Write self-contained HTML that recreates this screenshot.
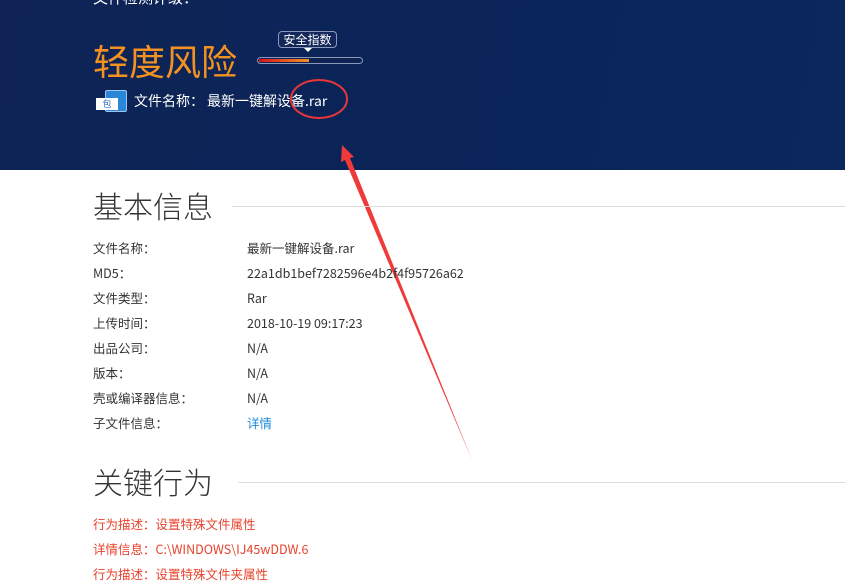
<!DOCTYPE html>
<html><head><meta charset="utf-8"><style>
*{margin:0;padding:0;box-sizing:border-box}
body{width:845px;height:583px;overflow:hidden;background:#fff;font-family:"Noto Sans CJK SC",sans-serif;position:relative}
.hdr{position:absolute;left:0;top:0;width:845px;height:170px;background:linear-gradient(100deg,#0f2455 0%,#0a2458 50%,#0b275d 100%)}
.a{position:absolute;white-space:nowrap;line-height:1.3}
.lbl{left:93px;font-size:12.5px;color:#333}
.val{left:247px;font-size:12.5px;color:#333}
.red{left:93px;font-size:12.5px;color:#e8412b}
.h2{left:93px;font-size:30px;color:#333;font-weight:300}
.line{position:absolute;height:1px;background:#ddd;right:0}
</style></head><body>
<div class="hdr"></div>
<div class="a" style="left:93px;top:-12px;font-size:15px;color:#fff">文件检测评级：</div>
<div class="a" style="left:93px;top:37px;font-size:36px;color:#f39121">轻度风险</div>
<div class="a" style="left:278px;top:31px;width:59px;height:17px;border:1px solid #8a99b8;border-radius:4px;background:#13275a;color:#fff;font-size:12px;line-height:15px;text-align:center">安全指数</div>
<div class="a" style="left:304px;top:48px;width:0;height:0;border-left:4px solid transparent;border-right:4px solid transparent;border-top:4px solid #fff"></div>
<div class="a" style="left:257px;top:57px;width:106px;height:7px;border:1px solid #8a99b8;border-radius:4px;background:#0d2252"></div>
<div class="a" style="left:259px;top:59px;width:50px;height:3px;background:linear-gradient(90deg,#d8141c,#f59220)"></div>
<div class="a" style="left:105px;top:90px;width:22px;height:22px;background:#2a86d8;border:1px solid #9cc6f0;border-radius:2px"></div>
<div class="a" style="left:96px;top:98px;width:22px;height:12px;background:#fff;color:#2a6fc0;font-size:9px;line-height:12px;text-align:center">包</div>
<div class="a" style="left:134px;top:92px;font-size:14px;color:#fff">文件名称：</div>
<div class="a" style="left:207px;top:92px;font-size:14px;color:#fff">最新一键解设备.rar</div>
<svg class="a" style="left:0;top:0" width="845" height="583">
<ellipse cx="319" cy="99" rx="28" ry="19" fill="none" stroke="#e8363a" stroke-width="2"/>
<polygon points="342,145 354,157 350,158 472,460 345,160 341,162" fill="#f03a3a"/>
</svg>
<div class="a h2" style="top:186px">基本信息</div>
<div class="line" style="left:232px;top:206px"></div>
<div class="a lbl" style="top:240px">文件名称：</div><div class="a val" style="top:240px">最新一键解设备.rar</div>
<div class="a lbl" style="top:265px">MD5：</div><div class="a val" style="top:265px">22a1db1bef7282596e4b2f4f95726a62</div>
<div class="a lbl" style="top:290px">文件类型：</div><div class="a val" style="top:290px">Rar</div>
<div class="a lbl" style="top:315px">上传时间：</div><div class="a val" style="top:315px">2018-10-19 09:17:23</div>
<div class="a lbl" style="top:340px">出品公司：</div><div class="a val" style="top:340px">N/A</div>
<div class="a lbl" style="top:365px">版本：</div><div class="a val" style="top:365px">N/A</div>
<div class="a lbl" style="top:390px">壳或编译器信息：</div><div class="a val" style="top:390px">N/A</div>
<div class="a lbl" style="top:415px">子文件信息：</div><div class="a val" style="top:415px;color:#1a8ad8">详情</div>
<div class="a h2" style="top:462px">关键行为</div>
<div class="line" style="left:238px;top:482px"></div>
<div class="a red" style="top:516px">行为描述：设置特殊文件属性</div>
<div class="a red" style="top:541px">详情信息：C:\WINDOWS\IJ45wDDW.6</div>
<div class="a red" style="top:566px">行为描述：设置特殊文件夹属性</div>
</body></html>
